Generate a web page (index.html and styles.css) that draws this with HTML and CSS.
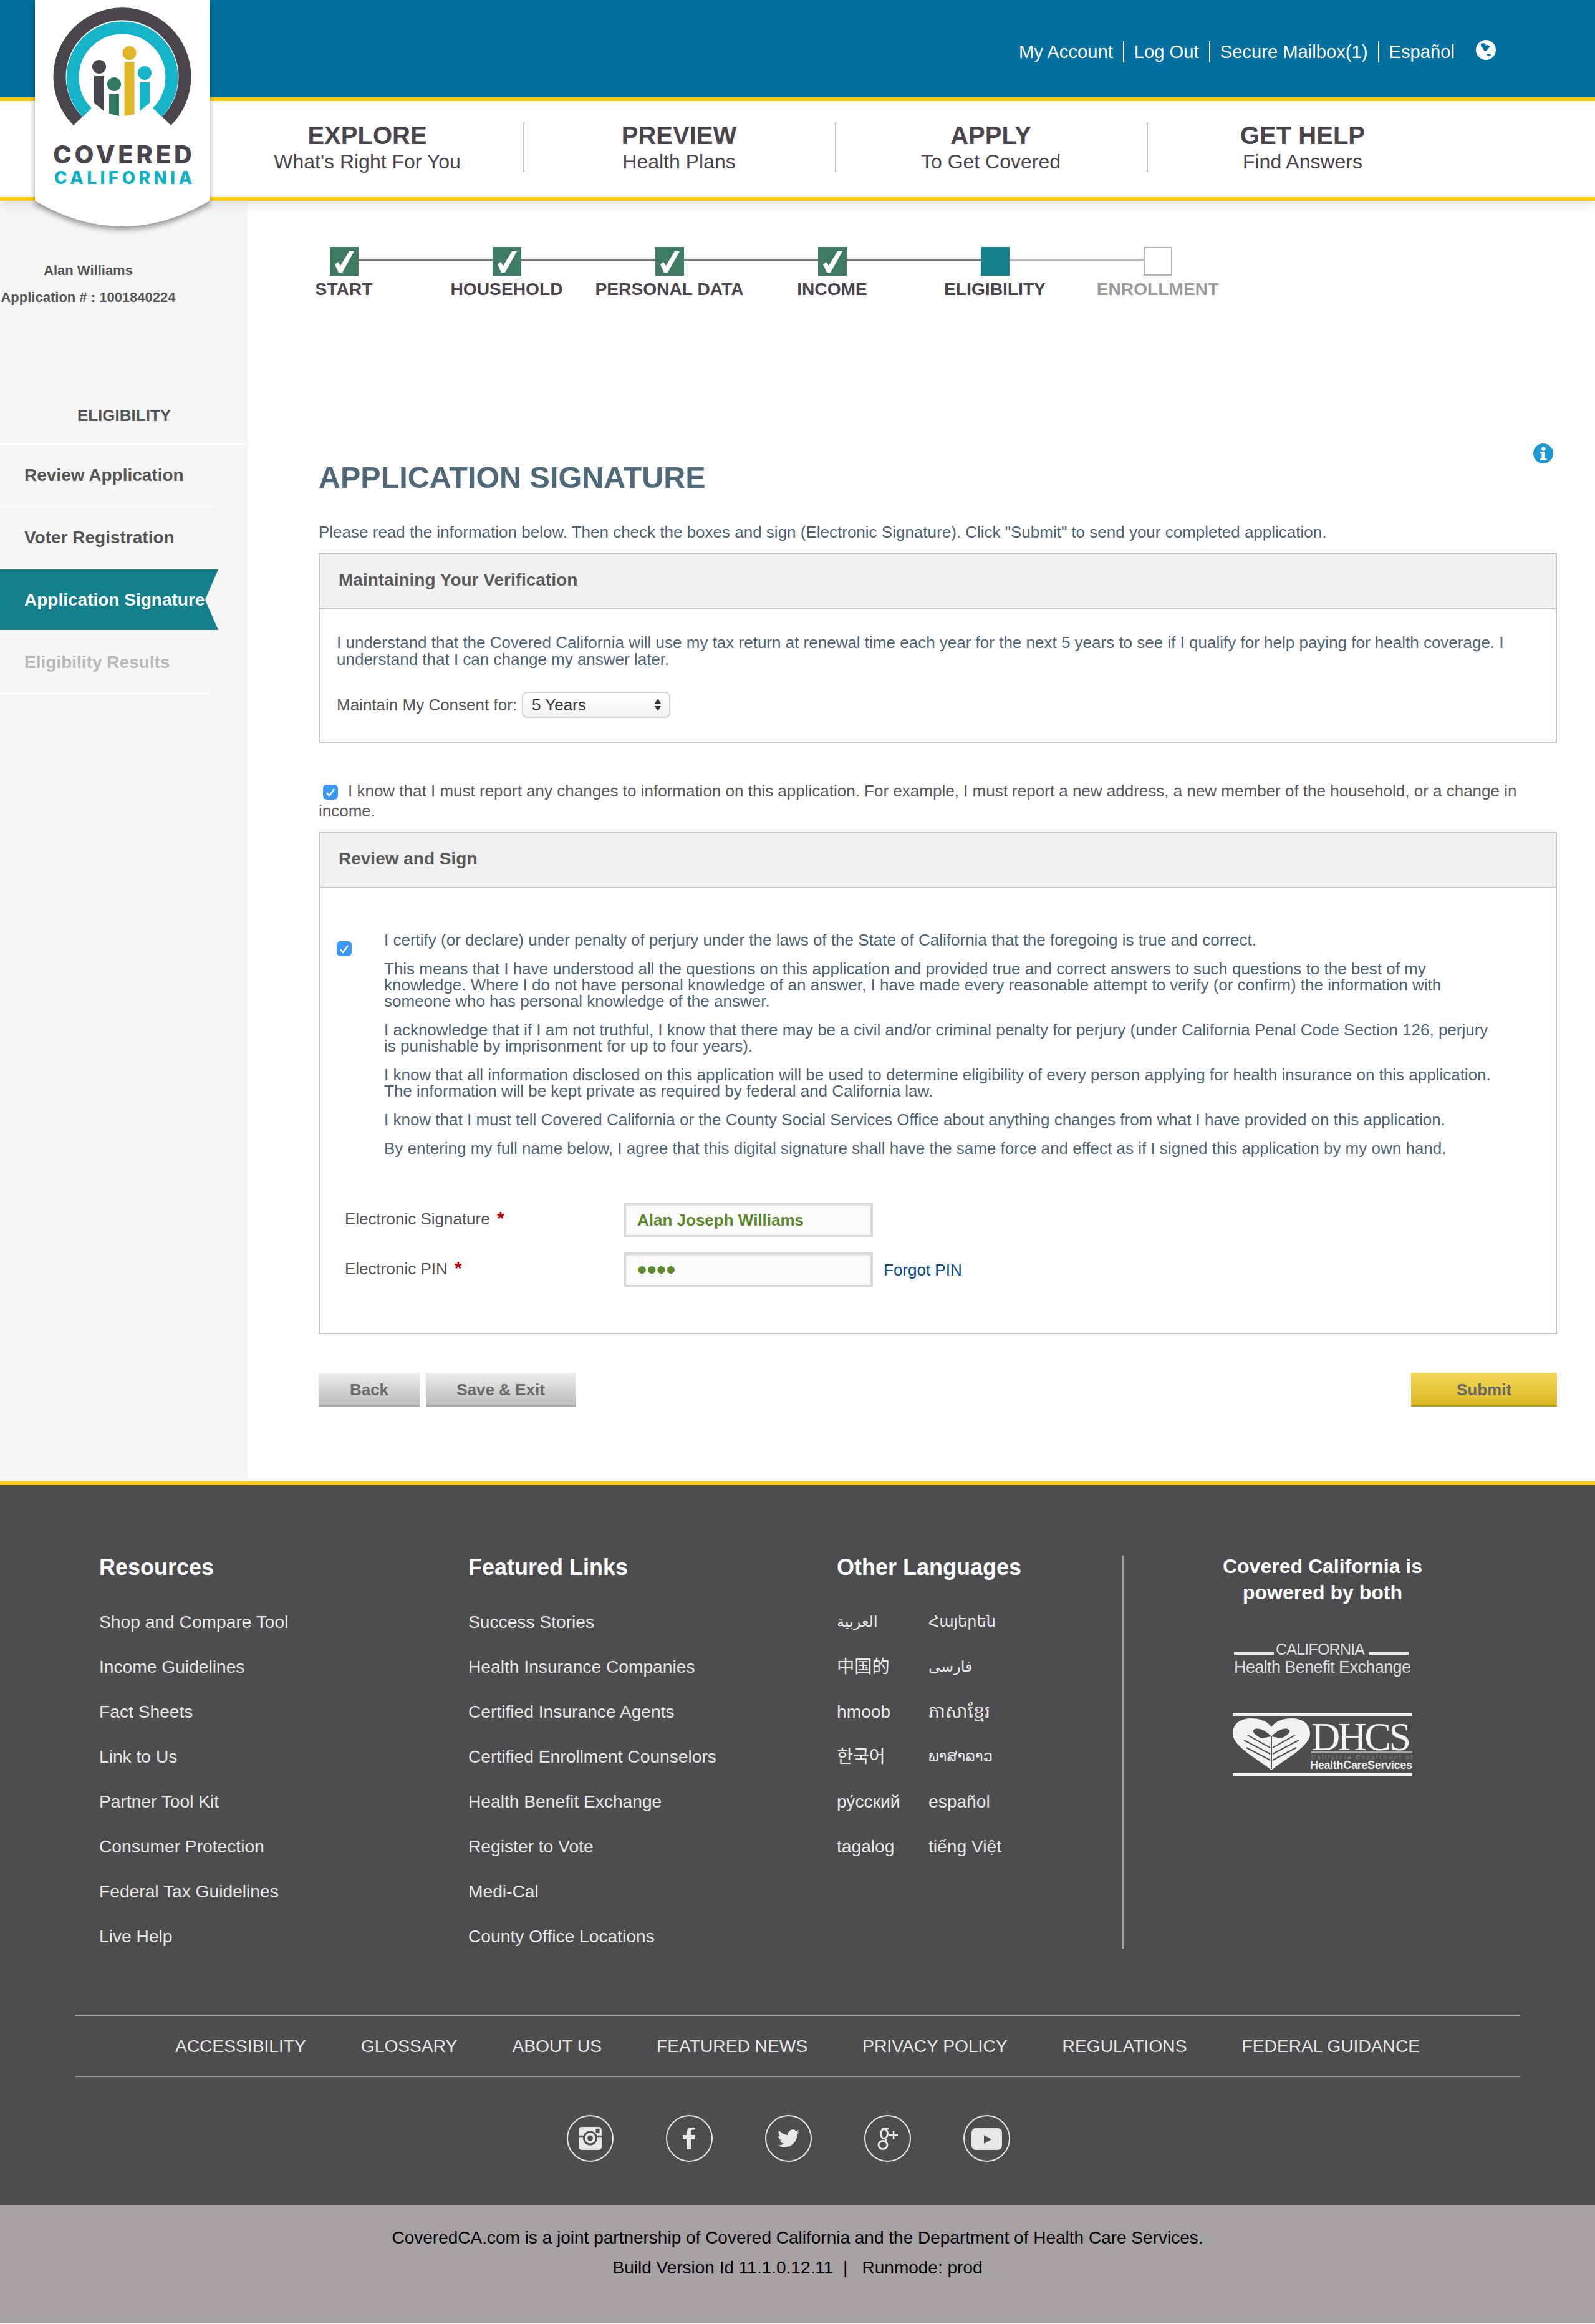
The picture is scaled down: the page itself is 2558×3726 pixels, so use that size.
FILE: index.html
```html
<!DOCTYPE html>
<html lang="en">
<head>
<meta charset="utf-8">
<title>Application Signature</title>
<link rel="stylesheet" href="styles.css">
</head>
<body>
<header class="site-header">
  <div class="logo-tab">
    <svg width="392" height="400" viewBox="0 0 392 400">
      <path class="tab-shape" d="M56 0H336V322Q196 404 56 322Z"/>
      <path class="arc-dark" d="M125 194A100.500 100.500 0 1 1 267 194"/>
      <path class="arc-teal" d="M139.800 180.200A79.500 79.500 0 1 1 252.200 180.200"/>
      <circle cx="159" cy="107" r="11" fill="#4a444c"/>
      <path d="M151 122H167V178L151 165Z" fill="#4a444c"/>
      <circle cx="183" cy="135" r="11" fill="#2f7a60"/>
      <path d="M175 151H191V186L175 182Z" fill="#2f7a60"/>
      <circle cx="207.500" cy="85" r="11" fill="#dfb625"/>
      <path d="M199.500 100H215.500V183L199.500 186Z" fill="#dfb625"/>
      <circle cx="232" cy="117" r="11" fill="#15b4c9"/>
      <path d="M224 132H240V165L224 178Z" fill="#15b4c9"/>
      <text class="logo-covered" x="85" y="262" textLength="223" lengthAdjust="spacing">COVERED</text>
      <text class="logo-california" x="87" y="295" textLength="221" lengthAdjust="spacing">CALIFORNIA</text>
    </svg>
  </div>
  <div class="topbar">
    <nav class="account-links">
      <a class="account-link">My Account</a>
      <a class="account-link">Log Out</a>
      <a class="account-link">Secure Mailbox(1)</a>
      <a class="account-link">Español</a>
      <svg class="globe" width="32" height="32" viewBox="0 0 32 32">
        <circle cx="16" cy="16" r="16" fill="#fff"/>
        <path d="M8 6L12 5 16 7 15 9 18 8 21 9 23 11 20 13 18 16 16 18 13 17 11 13 8 10ZM17 22L22 23 25 24 21 26 18 25Z" fill="#026f9e"/>
      </svg>
    </nav>
  </div>
  <nav class="mainnav">
    <a class="nav-item"><strong>EXPLORE</strong><span>What's Right For You</span></a>
    <a class="nav-item"><strong>PREVIEW</strong><span>Health Plans</span></a>
    <a class="nav-item"><strong>APPLY</strong><span>To Get Covered</span></a>
    <a class="nav-item"><strong>GET HELP</strong><span>Find Answers</span></a>
  </nav>
</header>

<div class="page">
  <aside class="sidebar">
    <div class="user-block">
      <p>Alan Williams</p>
      <p>Application # : 1001840224</p>
    </div>
    <h4 class="side-head">ELIGIBILITY</h4>
    <a class="side-item">Review Application</a>
    <a class="side-item">Voter Registration</a>
    <a class="side-item is-active">Application Signature</a>
    <a class="side-item is-disabled">Eligibility Results</a>
  </aside>

  <main class="content">
    <ol class="steps">
      <li class="step is-done"><span class="step-box"><svg width="46" height="46" viewBox="0 0 46 46"><path class="tick" d="M8 28l5-4 4 6L31 7h8L20 41h-6z"/></svg></span><span class="step-label">START</span></li>
      <li class="step is-done"><span class="step-box"><svg width="46" height="46" viewBox="0 0 46 46"><path class="tick" d="M8 28l5-4 4 6L31 7h8L20 41h-6z"/></svg></span><span class="step-label">HOUSEHOLD</span></li>
      <li class="step is-done"><span class="step-box"><svg width="46" height="46" viewBox="0 0 46 46"><path class="tick" d="M8 28l5-4 4 6L31 7h8L20 41h-6z"/></svg></span><span class="step-label">PERSONAL DATA</span></li>
      <li class="step is-done"><span class="step-box"><svg width="46" height="46" viewBox="0 0 46 46"><path class="tick" d="M8 28l5-4 4 6L31 7h8L20 41h-6z"/></svg></span><span class="step-label">INCOME</span></li>
      <li class="step is-current"><span class="step-box"></span><span class="step-label">ELIGIBILITY</span></li>
      <li class="step is-todo"><span class="step-box"></span><span class="step-label">ENROLLMENT</span></li>
    </ol>

    <div class="form">
      <div class="form-head">
        <h1 class="title">APPLICATION SIGNATURE</h1>
        <svg class="info" width="32" height="32" viewBox="0 0 32 32">
          <circle cx="16" cy="16" r="16" fill="#1b9ad6"/>
          <circle cx="16.500" cy="8.500" r="3.200" fill="#fff"/>
          <path d="M11 13h8v11h2.500v3h-10.500v-3h2.500v-8h-2.500z" fill="#fff"/>
        </svg>
      </div>
      <p class="intro">Please read the information below. Then check the boxes and sign (Electronic Signature). Click "Submit" to send your completed application.</p>

      <section class="panel">
        <h2 class="panel-head">Maintaining Your Verification</h2>
        <div class="panel-body verify-body">
          <p class="copy">I understand that the Covered California will use my tax return at renewal time each year for the next 5 years to see if I qualify for help paying for health coverage. I understand that I can change my answer later.</p>
          <div class="consent">
            <span class="consent-label">Maintain My Consent for:</span>
            <span class="select">5 Years
              <svg width="12" height="24" viewBox="0 0 12 24"><path d="M6 2l5 8H1zM6 22l-5-8h10z" fill="#333"/></svg>
            </span>
          </div>
        </div>
      </section>

      <p class="report"><span class="check check-inline"><svg width="24" height="24" viewBox="0 0 24 24"><path d="M6 13l4 5 8-11" fill="none" stroke="#fff" stroke-width="2.500"/></svg></span>I know that I must report any changes to information on this application. For example, I must report a new address, a new member of the household, or a change in income.</p>

      <section class="panel">
        <h2 class="panel-head">Review and Sign</h2>
        <div class="panel-body sign-body">
          <div class="certify">
            <span class="check check-cert"><svg width="24" height="24" viewBox="0 0 24 24"><path d="M6 13l4 5 8-11" fill="none" stroke="#fff" stroke-width="2.500"/></svg></span>
            <div class="certify-text copy">
              <p>I certify (or declare) under penalty of perjury under the laws of the State of California that the foregoing is true and correct.</p>
              <p>This means that I have understood all the questions on this application and provided true and correct answers to such questions to the best of my knowledge. Where I do not have personal knowledge of an answer, I have made every reasonable attempt to verify (or confirm) the information with someone who has personal knowledge of the answer.</p>
              <p>I acknowledge that if I am not truthful, I know that there may be a civil and/or criminal penalty for perjury (under California Penal Code Section 126, perjury is punishable by imprisonment for up to four years).</p>
              <p>I know that all information disclosed on this application will be used to determine eligibility of every person applying for health insurance on this application. The information will be kept private as required by federal and California law.</p>
              <p>I know that I must tell Covered California or the County Social Services Office about anything changes from what I have provided on this application.</p>
              <p>By entering my full name below, I agree that this digital signature shall have the same force and effect as if I signed this application by my own hand.</p>
            </div>
          </div>
          <div class="field">
            <span class="field-label">Electronic Signature <b class="req">*</b></span>
            <span class="input">Alan Joseph Williams</span>
          </div>
          <div class="field">
            <span class="field-label">Electronic PIN <b class="req">*</b></span>
            <span class="input input-pin">••••</span>
            <a class="forgot">Forgot PIN</a>
          </div>
        </div>
      </section>

      <div class="actions">
        <a class="btn btn-back">Back</a>
        <a class="btn btn-save">Save &amp; Exit</a>
        <a class="btn btn-submit">Submit</a>
      </div>
    </div>
  </main>
</div>

<footer class="footer">
  <div class="foot-cols">
    <div class="foot-col col-res">
      <h3 class="foot-head">Resources</h3>
      <a>Shop and Compare Tool</a>
      <a>Income Guidelines</a>
      <a>Fact Sheets</a>
      <a>Link to Us</a>
      <a>Partner Tool Kit</a>
      <a>Consumer Protection</a>
      <a>Federal Tax Guidelines</a>
      <a>Live Help</a>
    </div>
    <div class="foot-col col-feat">
      <h3 class="foot-head">Featured Links</h3>
      <a>Success Stories</a>
      <a>Health Insurance Companies</a>
      <a>Certified Insurance Agents</a>
      <a>Certified Enrollment Counselors</a>
      <a>Health Benefit Exchange</a>
      <a>Register to Vote</a>
      <a>Medi-Cal</a>
      <a>County Office Locations</a>
    </div>
    <div class="foot-col col-lang">
      <h3 class="foot-head">Other Languages</h3>
      <div class="lang-grid">
        <a class="lang-sm" lang="ar">العربية</a><a class="lang-sm" lang="hy">Հայերեն</a>
        <a lang="zh">中国的</a><a class="lang-sm" lang="fa">فارسی</a>
        <a>hmoob</a><a lang="km">ភាសាខ្មែរ</a>
        <a lang="ko">한국어</a><a class="lang-sm" lang="lo">ພາສາລາວ</a>
        <a lang="ru">ру́сский</a><a lang="es">español</a>
        <a>tagalog</a><a lang="vi">tiếng Việt</a>
      </div>
    </div>
    <div class="foot-partners">
      <h3 class="partners-head">Covered California is<br>powered by both</h3>
      <svg class="partner-logos" width="292" height="224" viewBox="0 0 292 224">
        <rect x="2" y="19" width="64" height="4" fill="#e6e6e6"/>
        <rect x="218" y="19" width="64" height="4" fill="#e6e6e6"/>
        <text class="hbe-ca" x="69" y="23" textLength="143">CALIFORNIA</text>
        <text class="hbe-name" x="2" y="52" textLength="284">Health Benefit Exchange</text>
        <rect y="116" width="288" height="5" fill="#f2f2f2"/>
        <rect y="212" width="288" height="6" fill="#f2f2f2"/>
        <path d="M62 208C40 190 0 170 0 150 0 132 14 125 30 125 44 125 56 130 62 139 68 130 80 125 94 125 110 125 124 132 124 150 124 170 84 190 62 208Z" fill="#f2f2f2"/>
        <path d="M62 154C54 146 44 140 36 142 28 145 36 152 46 157ZM62 154C70 146 80 140 88 142 96 145 88 152 78 157Z" fill="#4d4d4f"/>
        <path d="M62 154V206M60 172L24 152M60 182L18 160M60 192L22 172M64 172L100 152M64 182L106 160M64 192L102 172" fill="none" stroke="#4d4d4f" stroke-width="2"/>
        <text class="dhcs" x="126" y="176" textLength="160">DHCS</text>
        <rect x="126" y="178" width="162" height="3" fill="#aaa"/>
        <text class="dhcs-mid" x="126" y="190" textLength="162">California Department of</text>
        <text class="dhcs-sub" x="124" y="206" textLength="164">HealthCareServices</text>
      </svg>
    </div>
  </div>

  <nav class="foot-nav">
    <a>ACCESSIBILITY</a><a>GLOSSARY</a><a>ABOUT US</a><a>FEATURED NEWS</a><a>PRIVACY POLICY</a><a>REGULATIONS</a><a>FEDERAL GUIDANCE</a>
  </nav>

  <div class="social">
    <a class="social-link"><svg width="75" height="75" viewBox="0 0 75 75">
      <rect x="19" y="19" width="37" height="37" rx="5" fill="#e8e8e8"/>
      <path d="M19 34H29M46 34H56" stroke="#4d4d4f" stroke-width="2.500"/>
      <circle cx="37.500" cy="37" r="10" fill="#e8e8e8" stroke="#4d4d4f" stroke-width="3"/>
      <circle cx="37.500" cy="37" r="4.500" fill="#4d4d4f"/>
      <rect x="46.500" y="22" width="6" height="7" rx="1" fill="#4d4d4f"/>
    </svg></a>
    <a class="social-link"><svg width="75" height="75" viewBox="0 0 75 75">
      <path d="M40 55V39h6l1-7h-7v-5c0-2 .6-3.500 3.500-3.500H47V20.300c-.7-.1-2.800-.3-5.200-.3-5.200 0-8.800 3.200-8.800 9v3h-6v7h6v16z" fill="#e8e8e8"/>
    </svg></a>
    <a class="social-link"><svg width="75" height="75" viewBox="0 0 75 75">
      <path transform="translate(20 20) scale(1.460)" d="M23.953 4.57a10 10 0 01-2.825.775 4.958 4.958 0 002.163-2.723c-.951.555-2.005.959-3.127 1.184a4.92 4.92 0 00-8.384 4.482C7.69 8.095 4.067 6.13 1.64 3.162a4.822 4.822 0 00-.666 2.475c0 1.71.87 3.213 2.188 4.096a4.904 4.904 0 01-2.228-.616v.06a4.923 4.923 0 003.946 4.827 4.996 4.996 0 01-2.212.085 4.936 4.936 0 004.604 3.417 9.867 9.867 0 01-6.102 2.105c-.39 0-.779-.023-1.17-.067a13.995 13.995 0 007.557 2.209c9.053 0 13.998-7.496 13.998-13.985 0-.21 0-.42-.015-.63A9.935 9.935 0 0024 4.59z" fill="#e8e8e8"/>
    </svg></a>
    <a class="social-link"><svg width="75" height="75" viewBox="0 0 75 75">
      <g fill="none" stroke="#e8e8e8">
        <ellipse cx="32" cy="30" rx="5.500" ry="7.500" stroke-width="3"/>
        <ellipse cx="30" cy="48" rx="7" ry="6.500" stroke-width="3"/>
        <path d="M28 22h11M33 37l2 3c1 2-1 3-2 4" stroke-width="2.500"/>
        <path d="M40 32h14M47 25v14" stroke-width="2.500"/>
      </g>
    </svg></a>
    <a class="social-link"><svg width="75" height="75" viewBox="0 0 75 75">
      <rect x="13" y="21" width="49" height="35" rx="7" fill="#e8e8e8"/>
      <path d="M33 32l12 7-12 7z" fill="#4d4d4f"/>
    </svg></a>
  </div>

  <div class="foot-bottom">
    <p>CoveredCA.com is a joint partnership of Covered California and the Department of Health Care Services.</p>
    <p>Build Version Id 11.1.0.12.11 &nbsp;|&nbsp;&nbsp; Runmode: prod</p>
  </div>
</footer>
</body>
</html>
```
FILE: styles.css
```css
* { box-sizing: border-box; }
html, body { margin: 0; padding: 0; }
body {
  width: 2558px;
  font-family: "Liberation Sans", Arial, "Noto Sans CJK SC", "DejaVu Sans", sans-serif;
  background: #fff;
  color: #4f6473;
}
p, h1, h2, h3, h4, ol { margin: 0; padding: 0; }
a { color: inherit; text-decoration: none; }

/* Header */
.site-header { position: relative; z-index: 5; box-shadow: 0 8px 16px rgba(0,0,0,.09); }
.logo-tab { position: absolute; left: 0; top: 0; z-index: 6; line-height: 0; }
.tab-shape { fill: #fff; filter: drop-shadow(0 5px 5px rgba(0,0,0,.4)); }
.arc-dark { fill: none; stroke: #4a444c; stroke-width: 20; }
.arc-teal { fill: none; stroke: #15b4c9; stroke-width: 20; }
.logo-covered { font: 800 40px Inter, "Liberation Sans", sans-serif; fill: #4a444c; }
.logo-california { font: 800 28px Inter, "Liberation Sans", sans-serif; fill: #0fb0c4; }
.topbar {
  height: 162px;
  background: #026f9e;
  border-bottom: 6px solid #ffcc00;
  display: flex;
  justify-content: flex-end;
  padding: 66px 159px 0 0;
}
.account-links { display: flex; align-items: flex-start; color: #fff; font-size: 29.200px; line-height: 34px; }
.account-link { padding: 0 16px; border-left: 2px solid #fff; }
.account-link:first-child { border-left: 0; }
.globe { margin: -2px 0 0 18px; }
.mainnav {
  height: 160px;
  background: #fff;
  border-bottom: 6px solid #ffcc00;
  display: flex;
  padding: 34px 0 0 339px;
  color: #4a444c;
}
.nav-item {
  width: 500px;
  height: 80px;
  padding-right: 2px;
  border-left: 2px solid #c4c4c4;
  display: flex;
  flex-direction: column;
  align-items: center;
  text-align: center;
}
.nav-item:first-child { border-left: 0; padding-right: 0; }
.nav-item strong { font-size: 40px; line-height: 46px; margin-top: -2px; }
.nav-item span { font-size: 32px; line-height: 38px; }

/* Layout */
.page { display: flex; }
.sidebar { width: 398px; flex: none; background: #f6f6f6; color: #555; }
.user-block { width: 283px; padding-top: 90px; text-align: center; font-size: 22px; font-weight: 700; line-height: 43px; }
.side-head {
  margin-top: 151px;
  padding-bottom: 28px;
  border-bottom: 2px solid #fff;
  text-align: center;
  font-size: 26px;
  line-height: 34px;
}
.side-item {
  display: block;
  width: 340px;
  height: 100px;
  padding-left: 39px;
  border-bottom: 2px solid #fff;
  font-size: 28px;
  font-weight: 700;
  line-height: 98px;
  white-space: nowrap;
}
.is-active {
  width: 350px;
  height: 97px;
  margin-bottom: 3px;
  border-bottom: 0;
  background: #13808b;
  color: #fff;
  line-height: 97px;
  clip-path: polygon(0 0, 100% 0, 94% 50%, 100% 100%, 0 100%);
}
.is-disabled { color: #b9b9b9; }

/* Content */
.content { flex: 1; padding: 74px 61px 120px 23px; }
.steps { display: flex; list-style: none; }
.step { position: relative; width: 261px; display: flex; flex-direction: column; align-items: center; font-size: 28.200px; font-weight: 700; color: #4a444c; }
.step-box { position: relative; z-index: 1; width: 46px; height: 46px; line-height: 0; }
.step::after { content: ""; position: absolute; left: 50%; top: 19px; width: 261px; height: 4px; background: #7d767d; }
.step.is-current::after { background: #bdbdbd; }
.step.is-todo::after { display: none; }
.is-done .step-box { background: #3f7a63; }
.is-current .step-box { background: #13808b; }
.is-todo .step-box { background: #fff; border: 2px solid #b4b4b4; }
.is-todo { color: #9a9a9a; }
.tick { fill: #fff; }
.step-label { margin-top: 5px; line-height: 32px; white-space: nowrap; }

.form { margin-left: 90px; }
.form-head { display: flex; justify-content: space-between; align-items: flex-start; margin-top: 232px; padding-right: 6px; }
.title { padding-top: 24px; font-size: 48.500px; line-height: 60px; color: #50697a; font-weight: 700; }
.info { flex: none; }
.intro { margin-top: 45px; font-size: 26px; line-height: 27px; }

.panel { border: 2px solid #c4c4c4; }
.intro + .panel { margin-top: 20px; }
.panel-head {
  height: 88px;
  padding-left: 30px;
  background: #f1f1f1;
  border-bottom: 2px solid #c4c4c4;
  color: #5a5a5a;
  font-size: 28px;
  line-height: 82px;
}
.copy { font-size: 26px; line-height: 26px; }
.verify-body { padding: 40px 60px 39px 27px; }
.verify-body .copy { line-height: 27px; }
.consent { display: flex; align-items: center; margin-top: 38px; height: 42px; color: #555; font-size: 26px; }
.select {
  margin-left: 8px;
  width: 238px;
  height: 42px;
  padding: 0 12px 0 14px;
  border: 2px solid #d4d4d4;
  border-radius: 8px;
  background: linear-gradient(#fff, #f1f1f1);
  display: flex;
  align-items: center;
  justify-content: space-between;
  color: #333;
}
.report { margin-top: 60px; font-size: 26px; line-height: 32px; color: #585858; }
.report + .panel { margin-top: 18px; }
.check { display: block; width: 24px; height: 24px; border-radius: 6px; background: #3b97fa; line-height: 0; }
.check-inline { display: inline-block; vertical-align: -5px; margin: 0 16px 0 7px; }
.sign-body { padding: 70px 0 73px 27px; }
.certify { display: flex; }
.check-cert { flex: none; margin-top: 15px; }
.certify-text { width: 1784px; margin-left: 52px; }
.certify-text p { margin-bottom: 20px; }
.certify-text p:last-child { margin-bottom: 0; }
.field { display: flex; align-items: center; height: 56px; margin-top: 24px; padding-left: 13px; color: #555; font-size: 26px; }
.certify + .field { margin-top: 74px; }
.field-label { width: 447px; margin-top: -6px; }
.req { color: #c40000; font-size: 30px; margin-left: 4px; }
.input {
  width: 400px;
  height: 56px;
  padding-left: 18px;
  border: 4px solid #d9d9d9;
  box-shadow: inset 0 2px 3px rgba(0,0,0,.08);
  background: #fbfbfb;
  color: #5b8a2d;
  font-weight: 700;
  line-height: 48px;
}
.input-pin { font-size: 44px; font-weight: 400; }
.forgot { margin-left: 17px; color: #0a4c8c; }

.actions { display: flex; margin-top: 62px; }
.btn {
  height: 54px;
  border-bottom: 2px solid #a8a8a8;
  background: linear-gradient(#eeeeee, #bbbbbb);
  color: #6a6a6a;
  font-size: 26px;
  font-weight: 700;
  line-height: 54px;
  text-align: center;
}
.btn-back { width: 162px; }
.btn-save { width: 240px; margin-left: 10px; }
.btn-submit { width: 234px; margin-left: auto; background: linear-gradient(#f3d856, #dcb925); border-bottom-color: #b99a16; }

/* Footer */
.footer { border-top: 6px solid #ffcc00; background: #4d4d4f; color: #e8e8e8; }
.foot-cols { display: flex; padding: 110px 0 0 159px; height: 849px; font-size: 28.200px; }
.foot-col a { display: block; line-height: 72px; white-space: nowrap; }
.foot-head { font-size: 36px; line-height: 44px; margin-bottom: 29px; color: #fff; }
.col-res { width: 592px; }
.col-feat { width: 591px; }
.col-lang { width: 458px; }
.lang-grid { display: grid; grid-template-columns: 147px 1fr; }
.lang-sm { font-size: 24px; }
.foot-partners { width: 640px; height: 630px; margin-top: 3px; border-left: 2px solid #a5a1a5; display: flex; flex-direction: column; align-items: center; }
.partners-head { margin-top: -4px; font-size: 32px; line-height: 42px; text-align: center; color: #fff; }
.partner-logos { margin-top: 56px; margin-left: 4px; }
.hbe-ca { font: 400 25px "Liberation Sans", sans-serif; fill: #dcdcdc; }
.hbe-name { font: 400 27px "Liberation Sans", sans-serif; fill: #dcdcdc; }
.dhcs { font: 400 64px "Liberation Serif", serif; fill: #f2f2f2; }
.dhcs-mid { font: 400 9px "Liberation Sans", sans-serif; fill: #8a8a8a; }
.dhcs-sub { font: 700 18px "Liberation Sans", sans-serif; fill: #eaeaea; }

.foot-nav {
  margin: 0 120px;
  height: 100px;
  border-top: 2px solid #a5a1a5;
  border-bottom: 2px solid #a5a1a5;
  display: flex;
  justify-content: center;
  gap: 88px;
  font-size: 28.200px;
  line-height: 96px;
}
.social { display: flex; justify-content: center; gap: 84px; padding: 61px 30px 70px 0; }
.social-link { display: block; width: 75px; height: 75px; border: 2px solid #e8e8e8; border-radius: 50%; overflow: hidden; line-height: 0; }
.social-link svg { margin: -2px; }
.foot-bottom { height: 188px; margin-bottom: 2px; padding-top: 28px; background: #a5a1a5; color: #000; text-align: center; font-size: 28px; line-height: 48px; }
```
